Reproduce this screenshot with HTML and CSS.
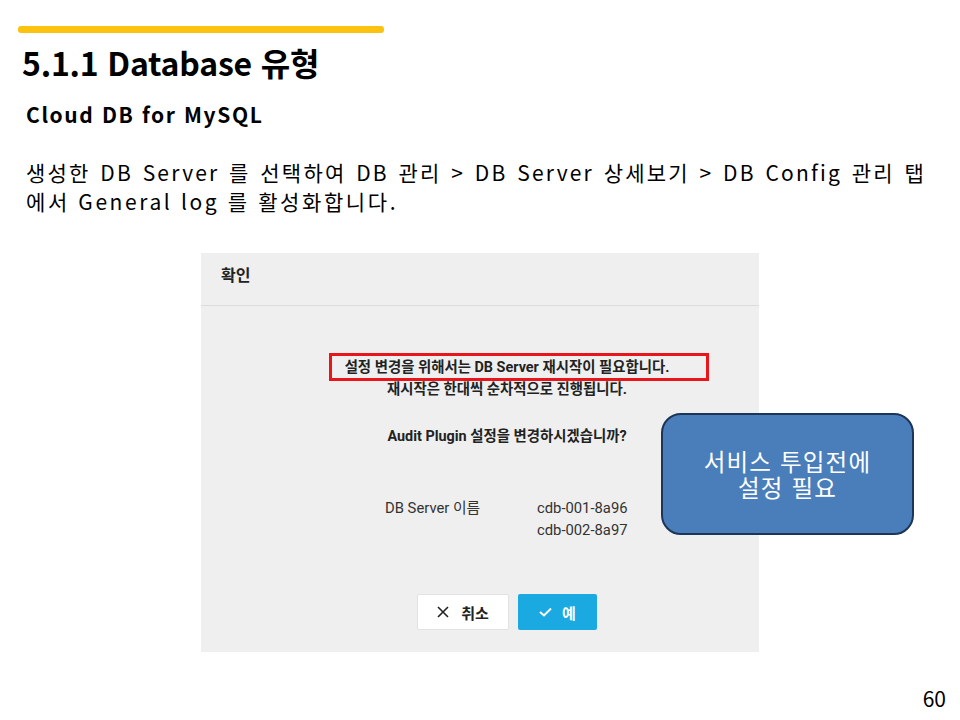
FILE: index.html
```html
<!DOCTYPE html>
<html lang="ko">
<head>
<meta charset="utf-8">
<link rel="stylesheet" href="styles.css">
</head>
<body>
<div class="slide">
  <div class="bar"></div>
  <h1 class="title">5.1.1 Database 유형</h1>
  <h2 class="subtitle">Cloud DB for MySQL</h2>
  <p class="desc"><span class="desc-line full">생성한 DB Server 를 선택하여 DB 관리 &gt; DB Server 상세보기 &gt; DB Config 관리 탭</span><span class="desc-line">에서 General log 를 활성화합니다.</span></p>

  <div class="dialog">
    <div class="dlg-head">확인</div>
    <div class="dlg-body">
      <div class="msg">
        <div class="line strong">설정 변경을 위해서는 DB Server 재시작이 필요합니다.</div>
        <div class="line strong">재시작은 한대씩 순차적으로 진행됩니다.</div>
        <div class="line strong question">Audit Plugin 설정을 변경하시겠습니까?</div>
      </div>
      <div class="info">
        <div class="info-label">DB Server 이름</div>
        <div class="info-values">
          <div>cdb-001-8a96</div>
          <div>cdb-002-8a97</div>
        </div>
      </div>
      <div class="buttons">
        <button class="btn btn-cancel"><svg width="12" height="12" viewBox="0 0 12 12"><path d="M1 1 L11 11 M11 1 L1 11" stroke="#222" stroke-width="1.6" fill="none"/></svg><span>취소</span></button>
        <button class="btn btn-ok"><svg width="13" height="10" viewBox="0 0 13 10"><path d="M1 5 L5 8.5 L12 1.5" stroke="#fff" stroke-width="2" fill="none"/></svg><span>예</span></button>
      </div>
    </div>
    <div class="highlight"></div>
  </div>

  <div class="callout"><span class="callout-line">서비스 투입전에</span><span class="callout-line">설정 필요</span></div>
  <div class="page-no">60</div>
</div>
</body>
</html>
```

FILE: styles.css
```css
* { box-sizing: border-box; }
html, body { margin: 0; padding: 0; background: #fff; }
body { font-family: "Noto Sans CJK KR", "Noto Sans", sans-serif; color: #000; }
.slide { position: relative; width: 960px; height: 720px; overflow: hidden; padding-top: 26px; }
.bar { margin-left: 18px; width: 366px; height: 7px; background: #fbc30f; border-radius: 3px; }
.title { margin: 6px 0 0 22px; font-size: 32px; font-weight: 700; line-height: 46px; letter-spacing: -0.2px; }
.subtitle { margin: 15px 0 0 26px; font-size: 21px; font-weight: 700; line-height: 28px; letter-spacing: 1.6px; }
.desc { margin: 30px 0 0 26px; width: 900px; font-size: 21px; line-height: 29px; letter-spacing: 2.6px; }
.desc-line { display: block; white-space: nowrap; }
.desc-line.full { white-space: normal; text-align: justify; text-align-last: justify; letter-spacing: 2.2px; }
.dialog { position: relative; margin: 37px 0 0 201px; width: 558px; height: 399px; background: #efefef; font-family: Roboto, "Noto Sans CJK KR", sans-serif; color: #222; }
.dlg-head { height: 53px; border-bottom: 1px solid #dcdcdc; padding: 10px 0 0 20px; font-family: "Noto Sans CJK KR", sans-serif; font-size: 16px; font-weight: 700; color: #222; line-height: 22px; }
.dlg-body { display: flex; flex-direction: column; align-items: center; padding: 51px 0 0 54px; }
.msg { display: flex; flex-direction: column; align-items: center; }
.line { font-size: 14.4px; line-height: 22px; }
.strong { font-weight: 700; }
.question { margin-top: 25px; }
.info { display: flex; margin-top: 49px; font-size: 14.8px; line-height: 22px; color: #333; }
.info-label { width: 152px; }
.info-values { width: 92px; }
.buttons { display: flex; gap: 9px; margin-top: 53px; }
.btn { display: flex; align-items: center; justify-content: center; gap: 12px; height: 36px; border-radius: 2px; font-family: "Noto Sans CJK KR", sans-serif; font-size: 15px; font-weight: 700; padding: 0; }
.btn-cancel { width: 92px; background: #fff; border: 1px solid #e2e2e2; color: #222; }
.btn-ok { width: 79px; background: #1aa9e1; border: none; color: #fff; gap: 10px; }
.highlight { position: absolute; left: 128px; top: 100px; width: 380px; height: 28px; border: 3px solid #e8151a; }
.callout { position: absolute; left: 661px; top: 413px; width: 253px; height: 122px; background: #4a7ebb; border: 2px solid #1d3557; border-radius: 20px; display: flex; flex-direction: column; align-items: center; justify-content: center; text-align: center; color: #fff; font-size: 23.5px; letter-spacing: 1.2px; }
.callout-line { display: block; line-height: 26px; height: 26px; }
.page-no { position: absolute; right: 14px; top: 684px; font-size: 21px; line-height: 28px; }
```
